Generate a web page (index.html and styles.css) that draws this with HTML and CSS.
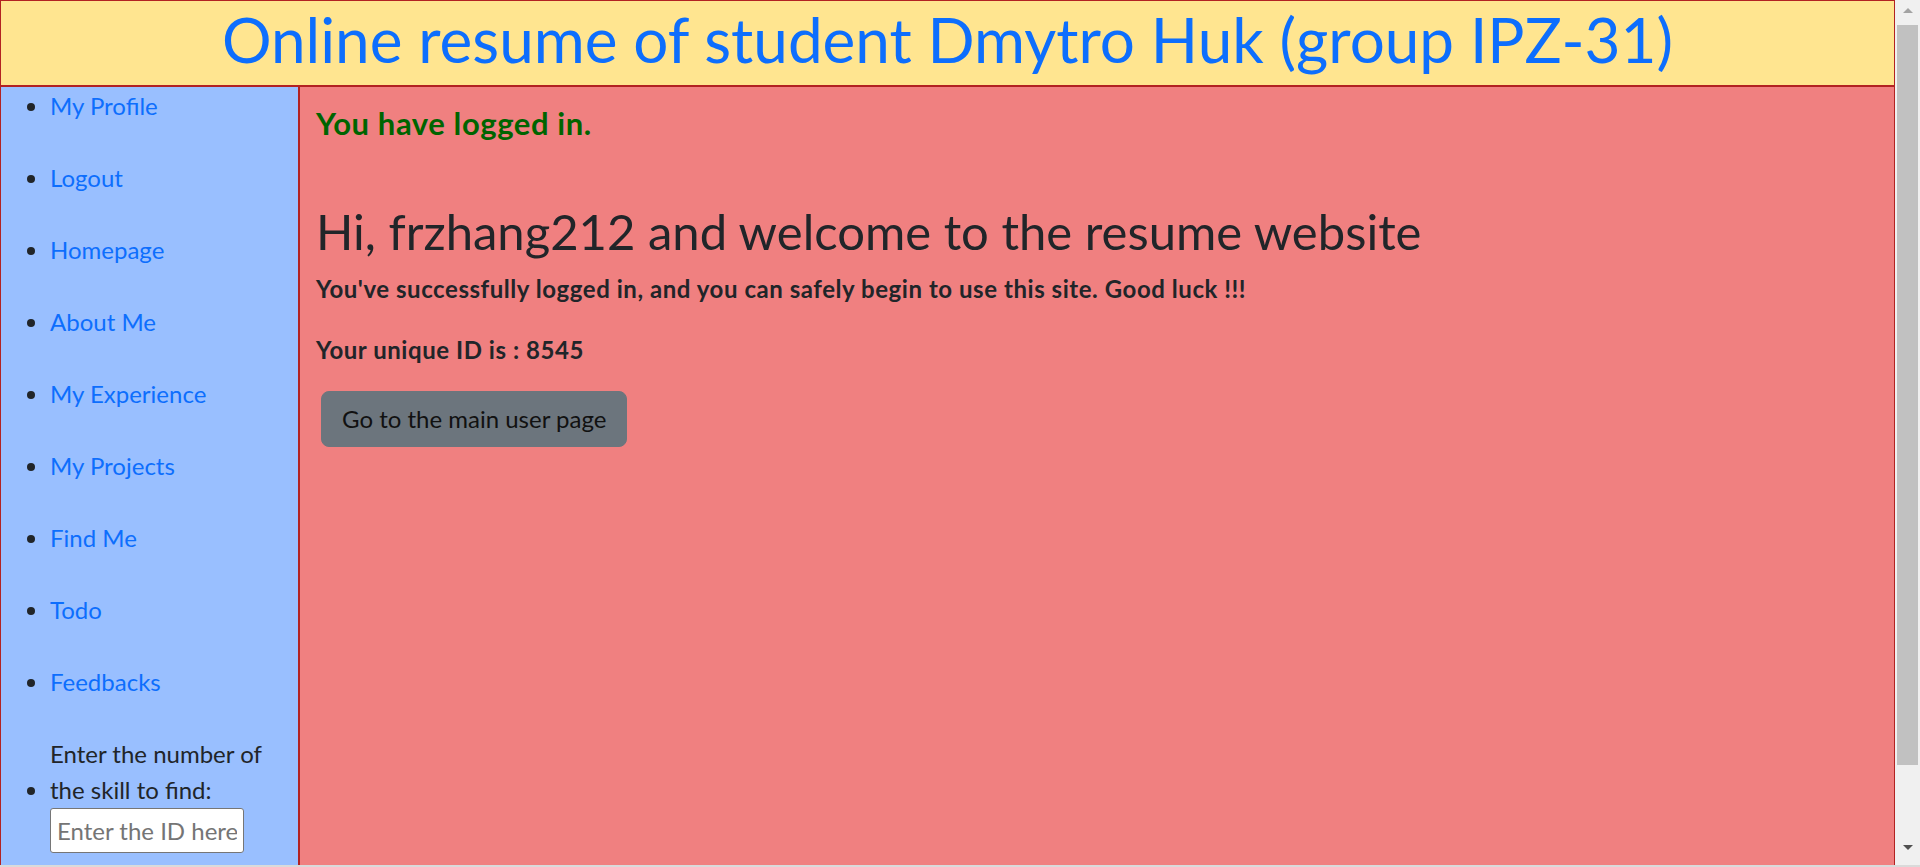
FILE: index.html
```html
<!DOCTYPE html>
<html lang="en">
<head>
<meta charset="utf-8">
<title>Online resume of student Dmytro Huk</title>
<link rel="stylesheet" href="styles.css">
</head>
<body>
<div class="viewport">
  <div class="window-row">
    <div class="page">
      <header class="site-header">
        <h1 class="site-title">Online resume of student Dmytro Huk (group IPZ-31)</h1>
      </header>
      <div class="layout">
        <nav class="sidebar">
          <ul class="nav-list">
            <li><a href="#">My Profile</a></li>
            <li><a href="#">Logout</a></li>
            <li><a href="#">Homepage</a></li>
            <li><a href="#">About Me</a></li>
            <li><a href="#">My Experience</a></li>
            <li><a href="#">My Projects</a></li>
            <li><a href="#">Find Me</a></li>
            <li><a href="#">Todo</a></li>
            <li><a href="#">Feedbacks</a></li>
            <li class="search-item"><label class="search-label" for="skill-id">Enter the number of the skill to find:</label><input id="skill-id" class="search-input" type="text" placeholder="Enter the ID here"></li>
          </ul>
        </nav>
        <main class="content">
          <h4 class="login-status">You have logged in.</h4>
          <h1 class="welcome">Hi, frzhang212 and welcome to the resume website</h1>
          <p class="info-text">You've successfully logged in, and you can safely begin to use this site. Good luck !!!</p>
          <p class="info-text id-text">Your unique ID is : 8545</p>
          <a class="main-btn" href="#">Go to the main user page</a>
        </main>
      </div>
    </div>
    <div class="scrollbar">
      <div class="sb-btn"><span class="arrow-up"></span></div>
      <div class="sb-track"><div class="sb-thumb"></div></div>
      <div class="sb-btn sb-btn-down"><span class="arrow-down"></span></div>
    </div>
  </div>
  <div class="hstrip"></div>
</div>
</body>
</html>
```

FILE: styles.css
```css
html, body {
  margin: 0;
  padding: 0;
  height: 100%;
  overflow: hidden;
}

body {
  font-family: "Lato", "Noto Sans", sans-serif;
  color: #212529;
  background: #ffffff;
}

.viewport {
  display: flex;
  flex-direction: column;
  width: 1920px;
  height: 867px;
}

.window-row {
  display: flex;
  flex: 1;
  min-height: 0;
}

.page {
  width: 1895px;
  display: flex;
  flex-direction: column;
  overflow: hidden;
}

.site-header {
  background: #ffe590;
  border: 1px solid #b22222;
  border-bottom-width: 2px;
  height: 84px;
  box-sizing: content-box;
}

.site-title {
  margin: 0;
  text-align: center;
  font-size: 62px;
  font-weight: 400;
  line-height: 76px;
  color: #0d6efd;
}

.layout {
  display: flex;
  flex: 1;
  min-height: 0;
}

.sidebar {
  width: 300px;
  box-sizing: border-box;
  background: #99bfff;
  border-left: 1px solid #b22222;
  border-right: 2px solid #b22222;
  flex-shrink: 0;
}

.nav-list {
  margin: 0;
  padding: 1px 0 0 49px;
  font-size: 24px;
  line-height: 36px;
}

.nav-list li {
  margin-bottom: 36px;
}

.nav-list a {
  color: #0d6efd;
  text-decoration: none;
}

.search-label {
  display: inline-block;
  width: 225px;
}

.search-input {
  display: inline-block;
  box-sizing: border-box;
  width: 194px;
  height: 45px;
  margin: 0;
  padding: 0 6px;
  border: 1px solid #767676;
  border-radius: 3px;
  background: #fff;
  font-family: inherit;
  font-size: 24px;
  color: #212529;
  vertical-align: top;
}

.search-input::placeholder {
  color: #757575;
}

.content {
  flex: 1;
  background: #f08080;
  border-right: 1px solid #b22222;
  padding: 18px 16px 0;
}

.login-status {
  margin: 0;
  font-size: 31px;
  line-height: 36px;
  font-weight: 700;
  letter-spacing: 0.6px;
  color: #006400;
}

.welcome {
  margin: 60px 0 0;
  font-size: 49px;
  line-height: 60px;
  font-weight: 400;
  color: #212529;
}

.info-text {
  margin: 10px 0 0;
  font-size: 24px;
  line-height: 36px;
  font-weight: 700;
  letter-spacing: 0.55px;
}

.id-text {
  margin-top: 25px;
}

.main-btn {
  display: inline-block;
  margin: 23px 0 0 5px;
  height: 56px;
  box-sizing: border-box;
  padding: 0 20px;
  line-height: 54px;
  border: 1px solid #6c757d;
  border-radius: 8px;
  background: #6c757d;
  color: #111;
  font-size: 24px;
  text-decoration: none;
}

.scrollbar {
  width: 25px;
  background: #f0f0f0;
  display: flex;
  flex-direction: column;
}

.sb-btn {
  height: 21px;
  display: flex;
  align-items: center;
  justify-content: center;
}

.sb-btn-down {
  height: 24px;
  align-items: flex-start;
  padding-top: 4px;
  box-sizing: border-box;
}

.arrow-up {
  width: 0;
  height: 0;
  border-left: 5px solid transparent;
  border-right: 5px solid transparent;
  border-bottom: 5px solid #a3a3a3;
}

.arrow-down {
  width: 0;
  height: 0;
  border-left: 5px solid transparent;
  border-right: 5px solid transparent;
  border-top: 5px solid #505050;
}

.sb-track {
  flex: 1;
  padding: 4px 2px 0;
}

.sb-thumb {
  height: 740px;
  background: #c1c1c1;
}

.hstrip {
  height: 2px;
  background: #dadada;
}
```
